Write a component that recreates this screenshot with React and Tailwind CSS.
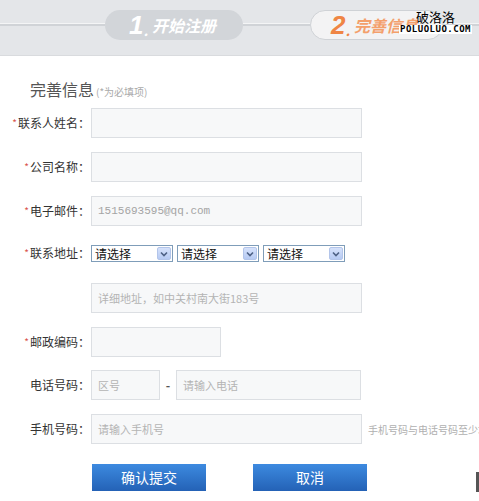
const cn = { fontFamily: '"Noto Sans CJK SC", "Noto Sans", sans-serif' };

const Star = () => <span className="text-[#d9534f] text-[10px] mr-[1px] relative top-[-1px]">*</span>;

const Label = ({ req, children }) => (
  <div className="w-[90px] shrink-0 text-right text-[12px] leading-[16px] text-[#333]">
    {req && <Star />}
    {children}：
  </div>
);

const Field = ({ className = "", value, placeholder, mono }) => (
  <div
    className={
      "h-[30px] border border-[#dcdfe3] bg-[#f7f8f9] flex items-center px-[6px] text-[11px] " +
      className
    }
  >
    {value ? (
      <span className="text-[#a4a4a4]" style={mono ? { fontFamily: '"Liberation Mono", monospace' } : undefined}>
        {value}
      </span>
    ) : (
      <span className="text-[#b4b4b4]">{placeholder}</span>
    )}
  </div>
);

const Select = () => (
  <div className="w-[82px] h-[17px] border border-[#7f9db9] bg-white flex items-center justify-between pl-[3px] pr-[1px]">
    <span className="text-[12px] leading-[14px] text-[#111]">请选择</span>
    <span className="w-[14px] h-[13px] rounded-[2px] bg-gradient-to-b from-[#d6e2fb] to-[#b6caf3] border border-[#b3c5ea] flex items-center justify-center">
      <svg width="8" height="6" viewBox="0 0 8 6">
        <path d="M1 1.5 L4 4.5 L7 1.5" fill="none" stroke="#4d6185" strokeWidth="1.6" />
      </svg>
    </span>
  </div>
);

const Line = ({ w, grow }) => (
  <div className={(grow ? "flex-1 " : "") + "h-[3px] border-t border-[#f4f5f6] bg-[#d0d3d7]"} style={w ? { width: w } : undefined} />
);

export default function App() {
  return (
    <div className="w-[479px] h-[501px] overflow-hidden bg-white relative" style={cn}>
      {/* header steps */}
      <div className="h-[56px] bg-[#e4e6e9] border-b border-[#d9dbde] flex items-center pb-[6px]">
        <Line w={105} />
        <div className="w-[138px] h-[30px] rounded-full bg-[#d2d5d9] flex items-center pl-[24px] italic font-bold text-white">
          <span className="text-[26px] leading-none" style={{ fontFamily: '"Liberation Sans", sans-serif' }}>1</span>
          <span className="text-[14px] leading-none mt-[10px] mr-[4px]">.</span>
          <span className="text-[16px] leading-none">开始注册</span>
        </div>
        <Line w={67} />
        <div className="w-[133px] h-[30px] rounded-full bg-[#f3f3f4] border border-[#cfd2d6] flex items-center pl-[20px] italic font-bold">
          <span className="text-[26px] leading-none text-[#ef8544]" style={{ fontFamily: '"Liberation Sans", sans-serif' }}>2</span>
          <span className="text-[14px] leading-none mt-[10px] mr-[4px] text-[#ef8544]">.</span>
          <span className="text-[16px] leading-none text-[#f3a06c]">完善信息</span>
        </div>
        <Line grow />
      </div>

      {/* watermark */}
      <div className="absolute left-[399px] top-[9px] flex flex-col items-center">
        <span className="text-[13px] leading-[16px] text-black">破洛洛</span>
        <span
          className="bg-white text-[9px] leading-[9px] font-bold tracking-[0.5px] text-black px-[1px]"
          style={{ fontFamily: '"DejaVu Sans Mono", monospace' }}
        >
          POLUOLUO.COM
        </span>
      </div>

      {/* title */}
      <div className="mt-[22px] pl-[30px] flex items-end">
        <span className="text-[16px] leading-[22px] text-[#555]">完善信息</span>
        <span className="text-[10px] leading-[16px] text-[#aaa] ml-[2px]">(*为必填项)</span>
      </div>

      {/* form */}
      <div className="mt-[8px] flex flex-col">
        <div className="flex items-center gap-[1px]">
          <Label req>联系人姓名</Label>
          <Field className="w-[271px]" />
        </div>
        <div className="flex items-center gap-[1px] mt-[14px]">
          <Label req>公司名称</Label>
          <Field className="w-[271px]" />
        </div>
        <div className="flex items-center gap-[1px] mt-[14px]">
          <Label req>电子邮件</Label>
          <Field className="w-[271px]" value="1515693595@qq.com" mono />
        </div>
        <div className="flex items-center gap-[1px] mt-[19px]">
          <Label req>联系地址</Label>
          <div className="flex gap-[4px]">
            <Select />
            <Select />
            <Select />
          </div>
        </div>
        <div className="flex items-center mt-[21px] pl-[91px]">
          <Field className="w-[271px]" placeholder="详细地址，如中关村南大街183号" />
        </div>
        <div className="flex items-center gap-[1px] mt-[14px]">
          <Label req>邮政编码</Label>
          <Field className="w-[130px]" />
        </div>
        <div className="flex items-center gap-[1px] mt-[13px]">
          <Label>电话号码</Label>
          <Field className="w-[69px]" placeholder="区号" />
          <span className="w-[14px] text-center text-[12px] font-bold text-[#555]">-</span>
          <Field className="w-[185px]" placeholder="请输入电话" />
        </div>
        <div className="flex items-center gap-[1px] mt-[14px]">
          <Label>手机号码</Label>
          <Field className="w-[271px] shrink-0" placeholder="请输入手机号" />
          <span className="ml-[5px] text-[10px] text-[#b0b0b0] whitespace-nowrap">手机号码与电话号码至少填一项</span>
        </div>
        <div className="flex items-center mt-[18px] pl-[92px]">
          <button className="w-[114px] h-[27px] bg-gradient-to-b from-[#3d8ae0] to-[#2462b6] text-white text-[14px] leading-none">
            确认提交
          </button>
          <button className="w-[114px] h-[27px] ml-[47px] bg-gradient-to-b from-[#3d8ae0] to-[#2462b6] text-white text-[14px] leading-none">
            取消
          </button>
          <div className="ml-auto w-[3px] h-[20px] mt-[10px] bg-[#555]" />
        </div>
      </div>
    </div>
  );
}
